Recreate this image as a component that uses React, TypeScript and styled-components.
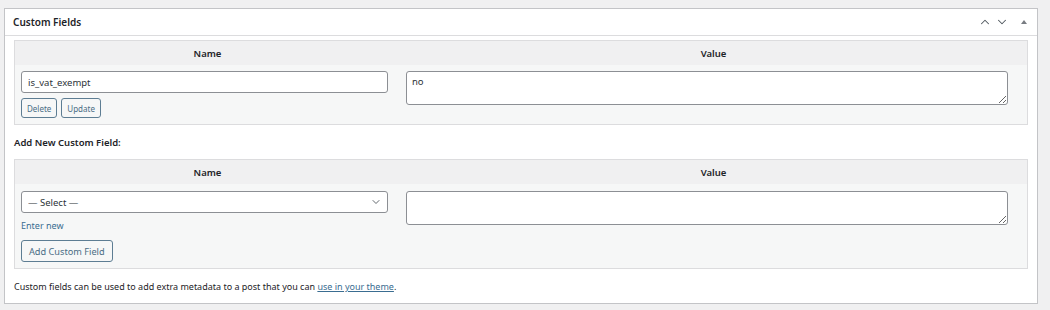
import React from 'react';
import styled, { createGlobalStyle } from 'styled-components';
import { ChevronDown, ChevronUp } from 'lucide-react';

const GlobalStyle = createGlobalStyle`
  html, body {
    margin: 0;
    padding: 0;
    background: #f0f0f1;
  }
  body {
    font-family: "Noto Sans", "Open Sans", sans-serif;
    color: #1d2327;
    font-size: 9px;
  }
`;

const Page = styled.div`
  padding: 8px 12px 7px 4px;
`;

const Panel = styled.div`
  background: #fff;
  border: 1px solid #c3c4c7;
`;

const PanelHeader = styled.div`
  display: flex;
  align-items: center;
  justify-content: space-between;
  height: 26px;
  padding: 0 10px 0 8px;
  border-bottom: 1px solid #dcdcde;
`;

const Title = styled.h2`
  margin: 0;
  font-size: 10px;
  font-weight: 600;
  color: #1d2327;
`;

const HandleActions = styled.div`
  display: flex;
  align-items: center;
  gap: 3px;
  color: #50575e;
`;

const ToggleArrow = styled.span`
  width: 0;
  height: 0;
  margin-left: 9px;
  border-left: 3px solid transparent;
  border-right: 3px solid transparent;
  border-bottom: 4px solid #787c82;
`;

const PanelBody = styled.div`
  padding: 4px 9px 10px 9px;
`;

const MetaTable = styled.div`
  border: 1px solid #dcdcde;
  background: #f6f7f7;
`;

const Columns = styled.div`
  display: grid;
  grid-template-columns: 385px 1fr;
`;

const HeadRow = styled(Columns)`
  height: 24px;
  background: #f0f0f1;
  align-items: center;
`;

const HeadCell = styled.div`
  text-align: center;
  font-weight: 600;
  font-size: 9.5px;
  color: #1d2327;
`;

const Cell = styled.div<{ $right?: boolean; $top?: number; $bottom?: number }>`
  display: flex;
  flex-direction: column;
  align-items: flex-start;
  padding: ${(p) => `${p.$top ?? 6}px ${p.$right ? 19 : 12}px ${p.$bottom ?? 6}px 6px`};
`;

const TextInput = styled.input`
  box-sizing: border-box;
  width: 100%;
  height: 22px;
  padding: 0 6px;
  border: 1px solid #8c8f94;
  border-radius: 3px;
  background: #fff;
  font-family: inherit;
  font-size: 9.5px;
  color: #2c3338;
  outline: none;
`;

const TextArea = styled.textarea`
  box-sizing: border-box;
  width: 100%;
  height: 34px;
  padding: 3px 5px;
  border: 1px solid #8c8f94;
  border-radius: 3px;
  background: #fff;
  font-family: inherit;
  font-size: 9.5px;
  color: #2c3338;
  resize: vertical;
  outline: none;
`;

const SelectWrap = styled.div`
  position: relative;
  width: 100%;
`;

const Select = styled.select`
  box-sizing: border-box;
  width: 100%;
  height: 22px;
  padding: 0 22px 0 6px;
  border: 1px solid #8c8f94;
  border-radius: 3px;
  background: #fff;
  font-family: inherit;
  font-size: 9.5px;
  color: #2c3338;
  appearance: none;
  outline: none;
`;

const SelectChevron = styled(ChevronDown)`
  position: absolute;
  right: 6px;
  top: 5px;
  width: 12px;
  height: 12px;
  color: #50575e;
  pointer-events: none;
`;

const ButtonRow = styled.div`
  display: flex;
  gap: 4px;
  margin-top: 5px;
`;

const Button = styled.button<{ $small?: boolean }>`
  box-sizing: border-box;
  height: ${(p) => (p.$small ? 20 : 22)}px;
  padding: ${(p) => (p.$small ? '0 5px' : '0 7px')};
  border: 1px solid #5d7d93;
  border-radius: 3px;
  background: #f6f7f7;
  font-family: inherit;
  font-size: ${(p) => (p.$small ? 8 : 9.2)}px;
  color: #4a6d85;
  cursor: pointer;
`;

const EnterNew = styled.a`
  margin-top: 6px;
  margin-bottom: 8px;
  font-size: 9px;
  color: #3a6d91;
  text-decoration: none;
`;

const SubHeading = styled.p`
  margin: 11px 0 10px;
  font-size: 9.5px;
  font-weight: 600;
  color: #1d2327;
`;

const Note = styled.p`
  margin: 11px 0 0;
  font-size: 9px;
  color: #1d2327;
`;

const NoteLink = styled.a`
  color: #3a6d91;
  text-decoration: underline;
`;

const App = () => (
  <Page>
    <GlobalStyle />
    <Panel>
      <PanelHeader>
        <Title>Custom Fields</Title>
        <HandleActions>
          <ChevronUp size={14} strokeWidth={1.8} />
          <ChevronDown size={14} strokeWidth={1.8} />
          <ToggleArrow />
        </HandleActions>
      </PanelHeader>
      <PanelBody>
        <MetaTable>
          <HeadRow>
            <HeadCell>Name</HeadCell>
            <HeadCell>Value</HeadCell>
          </HeadRow>
          <Columns>
            <Cell>
              <TextInput defaultValue="is_vat_exempt" />
              <ButtonRow>
                <Button $small>Delete</Button>
                <Button $small>Update</Button>
              </ButtonRow>
            </Cell>
            <Cell $right>
              <TextArea defaultValue="no" />
            </Cell>
          </Columns>
        </MetaTable>

        <SubHeading>Add New Custom Field:</SubHeading>

        <MetaTable>
          <HeadRow>
            <HeadCell>Name</HeadCell>
            <HeadCell>Value</HeadCell>
          </HeadRow>
          <Columns>
            <Cell $top={7} $bottom={6}>
              <SelectWrap>
                <Select defaultValue="">
                  <option value="">— Select —</option>
                </Select>
                <SelectChevron strokeWidth={1.8} />
              </SelectWrap>
              <EnterNew href="#">Enter new</EnterNew>
              <Button>Add Custom Field</Button>
            </Cell>
            <Cell $right $top={7}>
              <TextArea />
            </Cell>
          </Columns>
        </MetaTable>

        <Note>
          Custom fields can be used to add extra metadata to a post that you can{' '}
          <NoteLink href="#">use in your theme</NoteLink>.
        </Note>
      </PanelBody>
    </Panel>
  </Page>
);

export default App;
